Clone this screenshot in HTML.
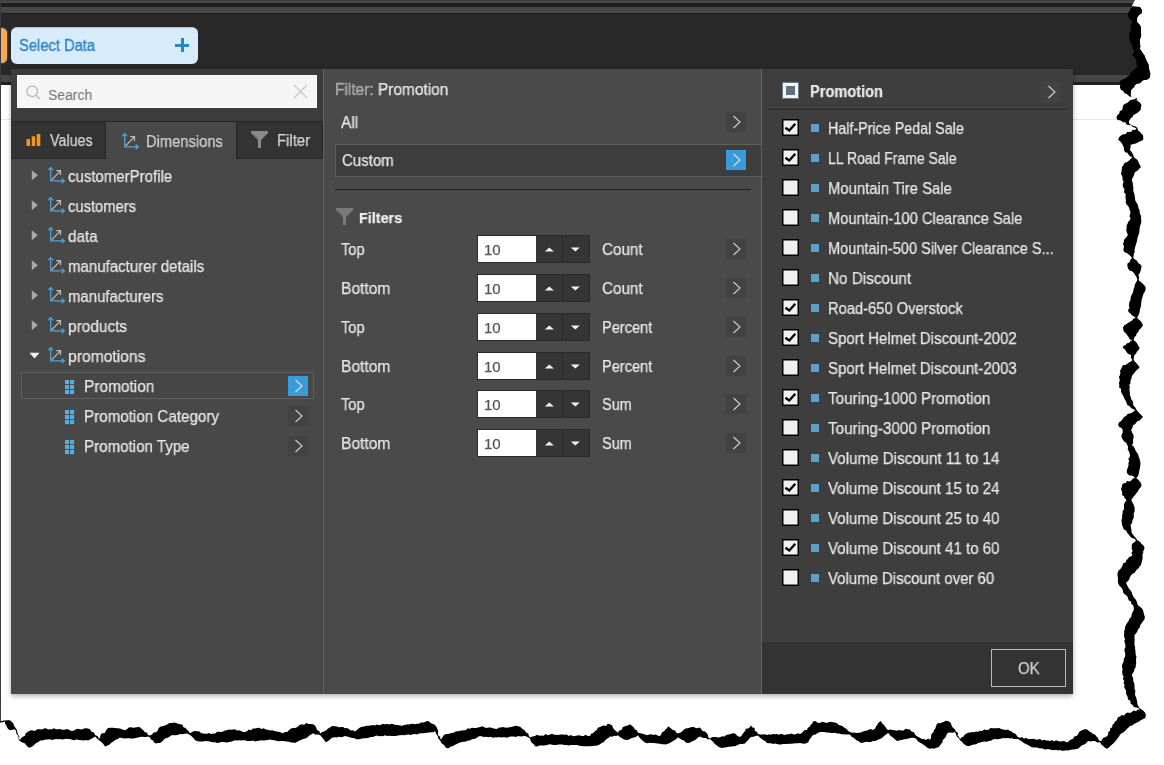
<!DOCTYPE html>
<html><head><meta charset="utf-8">
<style>
*{box-sizing:border-box;margin:0;padding:0}
html,body{width:1164px;height:765px;overflow:hidden;background:#fff}
body{position:relative;font-family:"Liberation Sans",sans-serif;font-size:15px;color:#e6e6e6}
.a{position:absolute}
.t{position:absolute;white-space:nowrap;line-height:1;will-change:transform;-webkit-text-stroke:0.25px currentColor}
</style></head><body>
<div class="a" style="left:0px;top:0px;width:1164px;height:1px;background:#3e3e3e;"></div>
<div class="a" style="left:0px;top:1px;width:1164px;height:2px;background:#4a4a4a;"></div>
<div class="a" style="left:0px;top:3px;width:1164px;height:4px;background:#1e1e1e;"></div>
<div class="a" style="left:0px;top:7px;width:1164px;height:6px;background:#474747;"></div>
<div class="a" style="left:0px;top:13px;width:1164px;height:1px;background:#1f1f1f;"></div>
<div class="a" style="left:0px;top:14px;width:1164px;height:61px;background:#282828;"></div>
<div class="a" style="left:0px;top:75px;width:1164px;height:7px;background:#474747;"></div>
<div class="a" style="left:0px;top:82px;width:1164px;height:3px;background:#1f1f1f;"></div>
<div class="a" style="left:0px;top:119px;width:1164px;height:1px;background:#e6e6e6;"></div>
<div class="a" style="left:-8px;top:27px;width:16px;height:37px;border-radius:6px;background:#f8ab52;border:1.2px solid #17486e"></div>
<div class="a" style="left:11px;top:27px;width:187px;height:37px;border-radius:6px;background:#d7ebfb;border-top:1px solid #b8c4cc"></div>
<div class="t" style="left:19.30px;top:37.66px;font-size:16px;color:#2f84c4;-webkit-text-stroke:0.35px #2f84c4;transform:scaleX(0.9205);transform-origin:0 0;">Select Data</div>
<div class="a" style="left:175px;top:44.4px;width:14.2px;height:2.4px;background:#2a84c0;"></div>
<div class="a" style="left:181.1px;top:38.1px;width:2.5px;height:13.9px;background:#2a84c0;"></div>
<div class="a" style="left:0px;top:0px;width:1px;height:722px;background:#3a3a3a;"></div>
<div class="a" style="left:11px;top:69px;width:1062px;height:625px;background:#4a4a4a;box-shadow:0 2px 5px rgba(0,0,0,.32)"></div>
<div class="a" style="left:11px;top:69px;width:312px;height:52px;background:#3c3c3c;"></div>
<div class="a" style="left:11px;top:121px;width:312px;height:1px;background:#262626;"></div>
<div class="a" style="left:11px;top:122px;width:312px;height:572px;background:#484848;"></div>
<div class="a" style="left:11px;top:122px;width:95px;height:37px;background:#333333;border-right:1px solid #262626;border-bottom:1px solid #262626"></div>
<div class="a" style="left:236px;top:122px;width:87px;height:37px;background:#333333;border-left:1px solid #262626;border-right:1px solid #262626;border-bottom:1px solid #262626"></div>
<div class="a" style="left:323px;top:69px;width:1px;height:625px;background:#636363;"></div>
<div class="a" style="left:17px;top:75px;width:300px;height:33px;background:#f5f5f5;border:1px solid #fdfdfd"></div>
<svg class="a" style="left:22.8px;top:82.8px" width="22" height="22"><circle cx="9.2" cy="8.3" r="5.3" fill="none" stroke="#bdbdbd" stroke-width="1.4"/><path d="M13 12.2 L16.8 16" stroke="#bdbdbd" stroke-width="1.5"/></svg>
<div class="t" style="left:47.90px;top:86.68px;font-size:15.5px;color:#767676;-webkit-text-stroke:0.1px #767676;transform:scaleX(0.9018);transform-origin:0 0;">Search</div>
<svg class="a" style="left:292px;top:83px" width="18" height="18"><path d="M2 2 L15 15 M15 2 L2 15" stroke="#c6c6c6" stroke-width="1.1"/></svg>
<svg class="a" style="left:26px;top:133px" width="16" height="14"><rect x="0.5" y="6" width="3.5" height="7" fill="#f7941d"/><rect x="5.7" y="3.3" width="3.4" height="9.7" fill="#f7941d"/><rect x="10.7" y="1" width="3.6" height="12" fill="#f7941d"/></svg>
<div class="t" style="left:50.20px;top:133.36px;font-size:16px;color:#d6d6d6;transform:scaleX(0.8919);transform-origin:0 0;">Values</div>
<svg class="a" style="left:121.7px;top:132.7px;overflow:visible" width="18" height="18"><path d="M2.7 0.4 V13.8 H16.5" fill="none" stroke="#52a2d2" stroke-width="1.3"/><path d="M0.3 3.1 L2.7 0.6 L5.1 3.1" fill="none" stroke="#52a2d2" stroke-width="1.3"/><path d="M13.6 11.4 L16.2 13.8 L13.6 16.2" fill="none" stroke="#52a2d2" stroke-width="1.3"/><path d="M3.6 12.8 L12.4 3.8 M8.3 3.7 H12.5 V7.9" fill="none" stroke="#bdbdbd" stroke-width="1.2"/></svg>
<div class="t" style="left:146.30px;top:134.26px;font-size:16px;color:#d0d0d0;transform:scaleX(0.9194);transform-origin:0 0;">Dimensions</div>
<svg class="a" style="left:251px;top:131px" width="17" height="17" viewBox="0 0 17 17"><path d="M0 0 H17 V2 L10 9 V17 H7 V9 L0 2 Z" fill="#8a8a8a"/><path d="M2 2.5 L7.5 8" stroke="#3a3a3a" stroke-width="0.6" fill="none" opacity="0.6"/></svg>
<div class="t" style="left:276.60px;top:133.36px;font-size:16px;color:#d6d6d6;transform:scaleX(0.9299);transform-origin:0 0;">Filter</div>
<svg class="a" style="left:31px;top:170.2px" width="8" height="11"><path d="M0.8 0.2 V10.2 L6.8 5.2 Z" fill="#a8a8a8"/></svg>
<svg class="a" style="left:48px;top:167.29999999999998px;overflow:visible" width="18" height="18"><path d="M2.7 0.4 V13.8 H16.5" fill="none" stroke="#52a2d2" stroke-width="1.3"/><path d="M0.3 3.1 L2.7 0.6 L5.1 3.1" fill="none" stroke="#52a2d2" stroke-width="1.3"/><path d="M13.6 11.4 L16.2 13.8 L13.6 16.2" fill="none" stroke="#52a2d2" stroke-width="1.3"/><path d="M3.6 12.8 L12.4 3.8 M8.3 3.7 H12.5 V7.9" fill="none" stroke="#bdbdbd" stroke-width="1.2"/></svg>
<div class="t" style="left:68.40px;top:168.56px;font-size:16px;color:#e6e6e6;transform:scaleX(0.9369);transform-origin:0 0;">customerProfile</div>
<svg class="a" style="left:31px;top:200.2px" width="8" height="11"><path d="M0.8 0.2 V10.2 L6.8 5.2 Z" fill="#a8a8a8"/></svg>
<svg class="a" style="left:48px;top:197.29999999999998px;overflow:visible" width="18" height="18"><path d="M2.7 0.4 V13.8 H16.5" fill="none" stroke="#52a2d2" stroke-width="1.3"/><path d="M0.3 3.1 L2.7 0.6 L5.1 3.1" fill="none" stroke="#52a2d2" stroke-width="1.3"/><path d="M13.6 11.4 L16.2 13.8 L13.6 16.2" fill="none" stroke="#52a2d2" stroke-width="1.3"/><path d="M3.6 12.8 L12.4 3.8 M8.3 3.7 H12.5 V7.9" fill="none" stroke="#bdbdbd" stroke-width="1.2"/></svg>
<div class="t" style="left:68.40px;top:198.56px;font-size:16px;color:#e6e6e6;transform:scaleX(0.9224);transform-origin:0 0;">customers</div>
<svg class="a" style="left:31px;top:230.2px" width="8" height="11"><path d="M0.8 0.2 V10.2 L6.8 5.2 Z" fill="#a8a8a8"/></svg>
<svg class="a" style="left:48px;top:227.29999999999998px;overflow:visible" width="18" height="18"><path d="M2.7 0.4 V13.8 H16.5" fill="none" stroke="#52a2d2" stroke-width="1.3"/><path d="M0.3 3.1 L2.7 0.6 L5.1 3.1" fill="none" stroke="#52a2d2" stroke-width="1.3"/><path d="M13.6 11.4 L16.2 13.8 L13.6 16.2" fill="none" stroke="#52a2d2" stroke-width="1.3"/><path d="M3.6 12.8 L12.4 3.8 M8.3 3.7 H12.5 V7.9" fill="none" stroke="#bdbdbd" stroke-width="1.2"/></svg>
<div class="t" style="left:68.40px;top:228.56px;font-size:16px;color:#e6e6e6;transform:scaleX(0.9528);transform-origin:0 0;">data</div>
<svg class="a" style="left:31px;top:260.2px" width="8" height="11"><path d="M0.8 0.2 V10.2 L6.8 5.2 Z" fill="#a8a8a8"/></svg>
<svg class="a" style="left:48px;top:257.3px;overflow:visible" width="18" height="18"><path d="M2.7 0.4 V13.8 H16.5" fill="none" stroke="#52a2d2" stroke-width="1.3"/><path d="M0.3 3.1 L2.7 0.6 L5.1 3.1" fill="none" stroke="#52a2d2" stroke-width="1.3"/><path d="M13.6 11.4 L16.2 13.8 L13.6 16.2" fill="none" stroke="#52a2d2" stroke-width="1.3"/><path d="M3.6 12.8 L12.4 3.8 M8.3 3.7 H12.5 V7.9" fill="none" stroke="#bdbdbd" stroke-width="1.2"/></svg>
<div class="t" style="left:68.40px;top:258.56px;font-size:16px;color:#e6e6e6;transform:scaleX(0.9395);transform-origin:0 0;">manufacturer details</div>
<svg class="a" style="left:31px;top:290.2px" width="8" height="11"><path d="M0.8 0.2 V10.2 L6.8 5.2 Z" fill="#a8a8a8"/></svg>
<svg class="a" style="left:48px;top:287.3px;overflow:visible" width="18" height="18"><path d="M2.7 0.4 V13.8 H16.5" fill="none" stroke="#52a2d2" stroke-width="1.3"/><path d="M0.3 3.1 L2.7 0.6 L5.1 3.1" fill="none" stroke="#52a2d2" stroke-width="1.3"/><path d="M13.6 11.4 L16.2 13.8 L13.6 16.2" fill="none" stroke="#52a2d2" stroke-width="1.3"/><path d="M3.6 12.8 L12.4 3.8 M8.3 3.7 H12.5 V7.9" fill="none" stroke="#bdbdbd" stroke-width="1.2"/></svg>
<div class="t" style="left:68.40px;top:288.56px;font-size:16px;color:#e6e6e6;transform:scaleX(0.9333);transform-origin:0 0;">manufacturers</div>
<svg class="a" style="left:31px;top:320.2px" width="8" height="11"><path d="M0.8 0.2 V10.2 L6.8 5.2 Z" fill="#a8a8a8"/></svg>
<svg class="a" style="left:48px;top:317.3px;overflow:visible" width="18" height="18"><path d="M2.7 0.4 V13.8 H16.5" fill="none" stroke="#52a2d2" stroke-width="1.3"/><path d="M0.3 3.1 L2.7 0.6 L5.1 3.1" fill="none" stroke="#52a2d2" stroke-width="1.3"/><path d="M13.6 11.4 L16.2 13.8 L13.6 16.2" fill="none" stroke="#52a2d2" stroke-width="1.3"/><path d="M3.6 12.8 L12.4 3.8 M8.3 3.7 H12.5 V7.9" fill="none" stroke="#bdbdbd" stroke-width="1.2"/></svg>
<div class="t" style="left:68.40px;top:318.56px;font-size:16px;color:#e6e6e6;transform:scaleX(0.9624);transform-origin:0 0;">products</div>
<svg class="a" style="left:29px;top:352.2px" width="12" height="8"><path d="M0.5 0.8 H10.5 L5.5 6.5 Z" fill="#f0f0f0"/></svg>
<svg class="a" style="left:48px;top:347.3px;overflow:visible" width="18" height="18"><path d="M2.7 0.4 V13.8 H16.5" fill="none" stroke="#52a2d2" stroke-width="1.3"/><path d="M0.3 3.1 L2.7 0.6 L5.1 3.1" fill="none" stroke="#52a2d2" stroke-width="1.3"/><path d="M13.6 11.4 L16.2 13.8 L13.6 16.2" fill="none" stroke="#52a2d2" stroke-width="1.3"/><path d="M3.6 12.8 L12.4 3.8 M8.3 3.7 H12.5 V7.9" fill="none" stroke="#bdbdbd" stroke-width="1.2"/></svg>
<div class="t" style="left:68.40px;top:348.56px;font-size:16px;color:#e6e6e6;transform:scaleX(0.9785);transform-origin:0 0;">promotions</div>
<div class="a" style="left:21px;top:372px;width:293px;height:27px;background:#464646;border:1px solid #5e5e5e"></div>
<svg class="a" style="left:65px;top:379.7px" width="10" height="15"><rect x="0" y="0" width="4.1" height="4.1" fill="#5aaedb"/><rect x="5" y="0" width="4.1" height="4.1" fill="#5aaedb"/><rect x="0" y="5" width="4.1" height="4.1" fill="#5aaedb"/><rect x="5" y="5" width="4.1" height="4.1" fill="#5aaedb"/><rect x="0" y="10" width="4.1" height="4.1" fill="#5aaedb"/><rect x="5" y="10" width="4.1" height="4.1" fill="#5aaedb"/></svg>
<div class="t" style="left:83.60px;top:379.06px;font-size:16px;color:#e6e6e6;transform:scaleX(0.9648);transform-origin:0 0;">Promotion</div>
<svg class="a" style="left:288px;top:376px" width="20" height="20"><rect width="20" height="20" fill="#3a9bd9"/><path d="M7.5 4 L14 10 L7.5 16" fill="none" stroke="#e0e0e0" stroke-width="1.1"/></svg>
<svg class="a" style="left:65px;top:409.7px" width="10" height="15"><rect x="0" y="0" width="4.1" height="4.1" fill="#5aaedb"/><rect x="5" y="0" width="4.1" height="4.1" fill="#5aaedb"/><rect x="0" y="5" width="4.1" height="4.1" fill="#5aaedb"/><rect x="5" y="5" width="4.1" height="4.1" fill="#5aaedb"/><rect x="0" y="10" width="4.1" height="4.1" fill="#5aaedb"/><rect x="5" y="10" width="4.1" height="4.1" fill="#5aaedb"/></svg>
<div class="t" style="left:83.60px;top:409.06px;font-size:16px;color:#e6e6e6;transform:scaleX(0.9488);transform-origin:0 0;">Promotion Category</div>
<svg class="a" style="left:288px;top:406px" width="20" height="20"><rect width="20" height="20" fill="#424242"/><path d="M7.5 4 L14 10 L7.5 16" fill="none" stroke="#cfcfcf" stroke-width="1.1"/></svg>
<svg class="a" style="left:65px;top:439.7px" width="10" height="15"><rect x="0" y="0" width="4.1" height="4.1" fill="#5aaedb"/><rect x="5" y="0" width="4.1" height="4.1" fill="#5aaedb"/><rect x="0" y="5" width="4.1" height="4.1" fill="#5aaedb"/><rect x="5" y="5" width="4.1" height="4.1" fill="#5aaedb"/><rect x="0" y="10" width="4.1" height="4.1" fill="#5aaedb"/><rect x="5" y="10" width="4.1" height="4.1" fill="#5aaedb"/></svg>
<div class="t" style="left:83.60px;top:439.06px;font-size:16px;color:#e6e6e6;transform:scaleX(0.9449);transform-origin:0 0;">Promotion Type</div>
<svg class="a" style="left:288px;top:436px" width="20" height="20"><rect width="20" height="20" fill="#424242"/><path d="M7.5 4 L14 10 L7.5 16" fill="none" stroke="#cfcfcf" stroke-width="1.1"/></svg>
<div class="t" style="left:334.60px;top:82.36px;font-size:16px;color:#e8e8e8;transform:scaleX(0.9654);transform-origin:0 0;"><span style="color:#a8a8a8;-webkit-text-stroke:0.5px #a8a8a8">Filter:</span> Promotion</div>
<div class="t" style="left:341.00px;top:114.96px;font-size:16px;color:#e6e6e6;transform:scaleX(0.9665);transform-origin:0 0;">All</div>
<svg class="a" style="left:726px;top:112px" width="20" height="20"><rect width="20" height="20" fill="#424242"/><path d="M7.5 4 L14 10 L7.5 16" fill="none" stroke="#cfcfcf" stroke-width="1.1"/></svg>
<div class="a" style="left:335px;top:144px;width:426px;height:33px;background:#3d3d3d;border:1px solid #5e5e5e;border-right:none"></div>
<div class="t" style="left:341.50px;top:152.96px;font-size:16px;color:#e6e6e6;transform:scaleX(0.9373);transform-origin:0 0;">Custom</div>
<svg class="a" style="left:726px;top:150px" width="20" height="20"><rect width="20" height="20" fill="#3a9bd9"/><path d="M7.5 4 L14 10 L7.5 16" fill="none" stroke="#e0e0e0" stroke-width="1.1"/></svg>
<div class="a" style="left:335px;top:189px;width:416px;height:1px;background:#222222;"></div>
<svg class="a" style="left:336px;top:208px" width="17" height="17" viewBox="0 0 17 17"><path d="M0 0 H17 V2 L10 9 V17 H7 V9 L0 2 Z" fill="#7a7a7a"/><path d="M2 2.5 L7.5 8" stroke="#3a3a3a" stroke-width="0.6" fill="none" opacity="0.6"/></svg>
<div class="t" style="left:358.90px;top:210.48px;font-size:15.5px;color:#f0f0f0;font-weight:bold;transform:scaleX(0.9284);transform-origin:0 0;">Filters</div>
<div class="t" style="left:341.30px;top:242.36px;font-size:16px;color:#e6e6e6;transform:scaleX(0.9099);transform-origin:0 0;">Top</div>
<div class="a" style="left:477px;top:235px;width:113px;height:28px;background:#2a2a2a;"></div>
<div class="a" style="left:478px;top:236px;width:58px;height:26px;background:#ffffff;"></div>
<div class="a" style="left:536px;top:236px;width:26px;height:26px;background:#353535;"></div>
<div class="a" style="left:563px;top:236px;width:26px;height:26px;background:#353535;"></div>
<div class="t" style="left:483.60px;top:241.50px;font-size:15px;color:#555555;">10</div>
<svg class="a" style="left:544px;top:247px" width="11" height="6"><path d="M0.8 4.6 L5.3 0.4 L9.8 4.6 Z" fill="#f4f4f4"/></svg>
<svg class="a" style="left:570px;top:247px" width="11" height="6"><path d="M0.8 0.4 L5.3 4.6 L9.8 0.4 Z" fill="#f4f4f4"/></svg>
<div class="t" style="left:602.10px;top:242.36px;font-size:16px;color:#e6e6e6;transform:scaleX(0.9524);transform-origin:0 0;">Count</div>
<svg class="a" style="left:726px;top:239px" width="20" height="20"><rect width="20" height="20" fill="#424242"/><path d="M7.5 4 L14 10 L7.5 16" fill="none" stroke="#cfcfcf" stroke-width="1.1"/></svg>
<div class="t" style="left:341.30px;top:281.36px;font-size:16px;color:#e6e6e6;transform:scaleX(0.9740);transform-origin:0 0;">Bottom</div>
<div class="a" style="left:477px;top:274px;width:113px;height:28px;background:#2a2a2a;"></div>
<div class="a" style="left:478px;top:275px;width:58px;height:26px;background:#ffffff;"></div>
<div class="a" style="left:536px;top:275px;width:26px;height:26px;background:#353535;"></div>
<div class="a" style="left:563px;top:275px;width:26px;height:26px;background:#353535;"></div>
<div class="t" style="left:483.60px;top:280.50px;font-size:15px;color:#555555;">10</div>
<svg class="a" style="left:544px;top:286px" width="11" height="6"><path d="M0.8 4.6 L5.3 0.4 L9.8 4.6 Z" fill="#f4f4f4"/></svg>
<svg class="a" style="left:570px;top:286px" width="11" height="6"><path d="M0.8 0.4 L5.3 4.6 L9.8 0.4 Z" fill="#f4f4f4"/></svg>
<div class="t" style="left:602.10px;top:281.36px;font-size:16px;color:#e6e6e6;transform:scaleX(0.9524);transform-origin:0 0;">Count</div>
<svg class="a" style="left:726px;top:278px" width="20" height="20"><rect width="20" height="20" fill="#424242"/><path d="M7.5 4 L14 10 L7.5 16" fill="none" stroke="#cfcfcf" stroke-width="1.1"/></svg>
<div class="t" style="left:341.30px;top:320.36px;font-size:16px;color:#e6e6e6;transform:scaleX(0.9099);transform-origin:0 0;">Top</div>
<div class="a" style="left:477px;top:313px;width:113px;height:28px;background:#2a2a2a;"></div>
<div class="a" style="left:478px;top:314px;width:58px;height:26px;background:#ffffff;"></div>
<div class="a" style="left:536px;top:314px;width:26px;height:26px;background:#353535;"></div>
<div class="a" style="left:563px;top:314px;width:26px;height:26px;background:#353535;"></div>
<div class="t" style="left:483.60px;top:319.50px;font-size:15px;color:#555555;">10</div>
<svg class="a" style="left:544px;top:325px" width="11" height="6"><path d="M0.8 4.6 L5.3 0.4 L9.8 4.6 Z" fill="#f4f4f4"/></svg>
<svg class="a" style="left:570px;top:325px" width="11" height="6"><path d="M0.8 0.4 L5.3 4.6 L9.8 0.4 Z" fill="#f4f4f4"/></svg>
<div class="t" style="left:602.10px;top:320.36px;font-size:16px;color:#e6e6e6;transform:scaleX(0.9099);transform-origin:0 0;">Percent</div>
<svg class="a" style="left:726px;top:317px" width="20" height="20"><rect width="20" height="20" fill="#424242"/><path d="M7.5 4 L14 10 L7.5 16" fill="none" stroke="#cfcfcf" stroke-width="1.1"/></svg>
<div class="t" style="left:341.30px;top:359.36px;font-size:16px;color:#e6e6e6;transform:scaleX(0.9740);transform-origin:0 0;">Bottom</div>
<div class="a" style="left:477px;top:352px;width:113px;height:28px;background:#2a2a2a;"></div>
<div class="a" style="left:478px;top:353px;width:58px;height:26px;background:#ffffff;"></div>
<div class="a" style="left:536px;top:353px;width:26px;height:26px;background:#353535;"></div>
<div class="a" style="left:563px;top:353px;width:26px;height:26px;background:#353535;"></div>
<div class="t" style="left:483.60px;top:358.50px;font-size:15px;color:#555555;">10</div>
<svg class="a" style="left:544px;top:364px" width="11" height="6"><path d="M0.8 4.6 L5.3 0.4 L9.8 4.6 Z" fill="#f4f4f4"/></svg>
<svg class="a" style="left:570px;top:364px" width="11" height="6"><path d="M0.8 0.4 L5.3 4.6 L9.8 0.4 Z" fill="#f4f4f4"/></svg>
<div class="t" style="left:602.10px;top:359.36px;font-size:16px;color:#e6e6e6;transform:scaleX(0.9099);transform-origin:0 0;">Percent</div>
<svg class="a" style="left:726px;top:356px" width="20" height="20"><rect width="20" height="20" fill="#424242"/><path d="M7.5 4 L14 10 L7.5 16" fill="none" stroke="#cfcfcf" stroke-width="1.1"/></svg>
<div class="t" style="left:341.30px;top:397.36px;font-size:16px;color:#e6e6e6;transform:scaleX(0.9099);transform-origin:0 0;">Top</div>
<div class="a" style="left:477px;top:390px;width:113px;height:28px;background:#2a2a2a;"></div>
<div class="a" style="left:478px;top:391px;width:58px;height:26px;background:#ffffff;"></div>
<div class="a" style="left:536px;top:391px;width:26px;height:26px;background:#353535;"></div>
<div class="a" style="left:563px;top:391px;width:26px;height:26px;background:#353535;"></div>
<div class="t" style="left:483.60px;top:396.50px;font-size:15px;color:#555555;">10</div>
<svg class="a" style="left:544px;top:402px" width="11" height="6"><path d="M0.8 4.6 L5.3 0.4 L9.8 4.6 Z" fill="#f4f4f4"/></svg>
<svg class="a" style="left:570px;top:402px" width="11" height="6"><path d="M0.8 0.4 L5.3 4.6 L9.8 0.4 Z" fill="#f4f4f4"/></svg>
<div class="t" style="left:602.10px;top:397.36px;font-size:16px;color:#e6e6e6;transform:scaleX(0.9056);transform-origin:0 0;">Sum</div>
<svg class="a" style="left:726px;top:394px" width="20" height="20"><rect width="20" height="20" fill="#424242"/><path d="M7.5 4 L14 10 L7.5 16" fill="none" stroke="#cfcfcf" stroke-width="1.1"/></svg>
<div class="t" style="left:341.30px;top:436.36px;font-size:16px;color:#e6e6e6;transform:scaleX(0.9740);transform-origin:0 0;">Bottom</div>
<div class="a" style="left:477px;top:429px;width:113px;height:28px;background:#2a2a2a;"></div>
<div class="a" style="left:478px;top:430px;width:58px;height:26px;background:#ffffff;"></div>
<div class="a" style="left:536px;top:430px;width:26px;height:26px;background:#353535;"></div>
<div class="a" style="left:563px;top:430px;width:26px;height:26px;background:#353535;"></div>
<div class="t" style="left:483.60px;top:435.50px;font-size:15px;color:#555555;">10</div>
<svg class="a" style="left:544px;top:441px" width="11" height="6"><path d="M0.8 4.6 L5.3 0.4 L9.8 4.6 Z" fill="#f4f4f4"/></svg>
<svg class="a" style="left:570px;top:441px" width="11" height="6"><path d="M0.8 0.4 L5.3 4.6 L9.8 0.4 Z" fill="#f4f4f4"/></svg>
<div class="t" style="left:602.10px;top:436.36px;font-size:16px;color:#e6e6e6;transform:scaleX(0.9056);transform-origin:0 0;">Sum</div>
<svg class="a" style="left:726px;top:433px" width="20" height="20"><rect width="20" height="20" fill="#424242"/><path d="M7.5 4 L14 10 L7.5 16" fill="none" stroke="#cfcfcf" stroke-width="1.1"/></svg>
<div class="a" style="left:762px;top:69px;width:311px;height:625px;background:#3e3e3e;"></div>
<div class="a" style="left:761px;top:69px;width:1px;height:625px;background:#646464;"></div>
<svg class="a" style="left:782px;top:82px" width="17" height="17"><rect x="0.5" y="0.5" width="16" height="16" fill="#f4f4f4" stroke="#6b7c8c" stroke-width="1"/><rect x="4" y="4" width="9" height="9" fill="#5f7181"/></svg>
<div class="t" style="left:810.00px;top:84.36px;font-size:16px;color:#e8e8e8;font-weight:bold;transform:scaleX(0.9107);transform-origin:0 0;">Promotion</div>
<svg class="a" style="left:1041px;top:82px" width="20" height="20"><rect width="20" height="20" fill="#424242"/><path d="M7.5 4 L14 10 L7.5 16" fill="none" stroke="#cfcfcf" stroke-width="1.1"/></svg>
<div class="a" style="left:768px;top:109px;width:299px;height:1px;background:#282828;"></div>
<svg class="a" style="left:782px;top:119px" width="17" height="17"><rect x="0.75" y="0.75" width="15.5" height="15.5" fill="#f0f0f0" stroke="#000" stroke-width="1.5"/><path d="M3.4 8.7 L7.3 11.5 L13.3 4.8" fill="none" stroke="#000" stroke-width="2.3"/></svg>
<div class="a" style="left:811px;top:124px;width:8px;height:8px;background:#5d9fc8;"></div>
<div class="t" style="left:828.10px;top:121.16px;font-size:16px;color:#e6e6e6;transform:scaleX(0.8930);transform-origin:0 0;">Half-Price Pedal Sale</div>
<svg class="a" style="left:782px;top:149px" width="17" height="17"><rect x="0.75" y="0.75" width="15.5" height="15.5" fill="#f0f0f0" stroke="#000" stroke-width="1.5"/><path d="M3.4 8.7 L7.3 11.5 L13.3 4.8" fill="none" stroke="#000" stroke-width="2.3"/></svg>
<div class="a" style="left:811px;top:154px;width:8px;height:8px;background:#5d9fc8;"></div>
<div class="t" style="left:828.10px;top:151.16px;font-size:16px;color:#e6e6e6;transform:scaleX(0.8739);transform-origin:0 0;">LL Road Frame Sale</div>
<svg class="a" style="left:782px;top:179px" width="17" height="17"><rect x="0.75" y="0.75" width="15.5" height="15.5" fill="#f0f0f0" stroke="#000" stroke-width="1.5"/></svg>
<div class="a" style="left:811px;top:184px;width:8px;height:8px;background:#5d9fc8;"></div>
<div class="t" style="left:828.10px;top:181.16px;font-size:16px;color:#e6e6e6;transform:scaleX(0.9279);transform-origin:0 0;">Mountain Tire Sale</div>
<svg class="a" style="left:782px;top:209px" width="17" height="17"><rect x="0.75" y="0.75" width="15.5" height="15.5" fill="#f0f0f0" stroke="#000" stroke-width="1.5"/></svg>
<div class="a" style="left:811px;top:214px;width:8px;height:8px;background:#5d9fc8;"></div>
<div class="t" style="left:828.10px;top:211.16px;font-size:16px;color:#e6e6e6;transform:scaleX(0.9181);transform-origin:0 0;">Mountain-100 Clearance Sale</div>
<svg class="a" style="left:782px;top:239px" width="17" height="17"><rect x="0.75" y="0.75" width="15.5" height="15.5" fill="#f0f0f0" stroke="#000" stroke-width="1.5"/></svg>
<div class="a" style="left:811px;top:244px;width:8px;height:8px;background:#5d9fc8;"></div>
<div class="t" style="left:828.10px;top:241.16px;font-size:16px;color:#e6e6e6;transform:scaleX(0.9097);transform-origin:0 0;">Mountain-500 Silver Clearance S...</div>
<svg class="a" style="left:782px;top:269px" width="17" height="17"><rect x="0.75" y="0.75" width="15.5" height="15.5" fill="#f0f0f0" stroke="#000" stroke-width="1.5"/></svg>
<div class="a" style="left:811px;top:274px;width:8px;height:8px;background:#5d9fc8;"></div>
<div class="t" style="left:828.10px;top:271.16px;font-size:16px;color:#e6e6e6;transform:scaleX(0.9539);transform-origin:0 0;">No Discount</div>
<svg class="a" style="left:782px;top:299px" width="17" height="17"><rect x="0.75" y="0.75" width="15.5" height="15.5" fill="#f0f0f0" stroke="#000" stroke-width="1.5"/><path d="M3.4 8.7 L7.3 11.5 L13.3 4.8" fill="none" stroke="#000" stroke-width="2.3"/></svg>
<div class="a" style="left:811px;top:304px;width:8px;height:8px;background:#5d9fc8;"></div>
<div class="t" style="left:828.10px;top:301.16px;font-size:16px;color:#e6e6e6;transform:scaleX(0.9188);transform-origin:0 0;">Road-650 Overstock</div>
<svg class="a" style="left:782px;top:329px" width="17" height="17"><rect x="0.75" y="0.75" width="15.5" height="15.5" fill="#f0f0f0" stroke="#000" stroke-width="1.5"/><path d="M3.4 8.7 L7.3 11.5 L13.3 4.8" fill="none" stroke="#000" stroke-width="2.3"/></svg>
<div class="a" style="left:811px;top:334px;width:8px;height:8px;background:#5d9fc8;"></div>
<div class="t" style="left:828.10px;top:331.16px;font-size:16px;color:#e6e6e6;transform:scaleX(0.9391);transform-origin:0 0;">Sport Helmet Discount-2002</div>
<svg class="a" style="left:782px;top:359px" width="17" height="17"><rect x="0.75" y="0.75" width="15.5" height="15.5" fill="#f0f0f0" stroke="#000" stroke-width="1.5"/></svg>
<div class="a" style="left:811px;top:364px;width:8px;height:8px;background:#5d9fc8;"></div>
<div class="t" style="left:828.10px;top:361.16px;font-size:16px;color:#e6e6e6;transform:scaleX(0.9391);transform-origin:0 0;">Sport Helmet Discount-2003</div>
<svg class="a" style="left:782px;top:389px" width="17" height="17"><rect x="0.75" y="0.75" width="15.5" height="15.5" fill="#f0f0f0" stroke="#000" stroke-width="1.5"/><path d="M3.4 8.7 L7.3 11.5 L13.3 4.8" fill="none" stroke="#000" stroke-width="2.3"/></svg>
<div class="a" style="left:811px;top:394px;width:8px;height:8px;background:#5d9fc8;"></div>
<div class="t" style="left:828.10px;top:391.16px;font-size:16px;color:#e6e6e6;transform:scaleX(0.9508);transform-origin:0 0;">Touring-1000 Promotion</div>
<svg class="a" style="left:782px;top:419px" width="17" height="17"><rect x="0.75" y="0.75" width="15.5" height="15.5" fill="#f0f0f0" stroke="#000" stroke-width="1.5"/></svg>
<div class="a" style="left:811px;top:424px;width:8px;height:8px;background:#5d9fc8;"></div>
<div class="t" style="left:828.10px;top:421.16px;font-size:16px;color:#e6e6e6;transform:scaleX(0.9508);transform-origin:0 0;">Touring-3000 Promotion</div>
<svg class="a" style="left:782px;top:449px" width="17" height="17"><rect x="0.75" y="0.75" width="15.5" height="15.5" fill="#f0f0f0" stroke="#000" stroke-width="1.5"/></svg>
<div class="a" style="left:811px;top:454px;width:8px;height:8px;background:#5d9fc8;"></div>
<div class="t" style="left:828.10px;top:451.16px;font-size:16px;color:#e6e6e6;transform:scaleX(0.9464);transform-origin:0 0;">Volume Discount 11 to 14</div>
<svg class="a" style="left:782px;top:479px" width="17" height="17"><rect x="0.75" y="0.75" width="15.5" height="15.5" fill="#f0f0f0" stroke="#000" stroke-width="1.5"/><path d="M3.4 8.7 L7.3 11.5 L13.3 4.8" fill="none" stroke="#000" stroke-width="2.3"/></svg>
<div class="a" style="left:811px;top:484px;width:8px;height:8px;background:#5d9fc8;"></div>
<div class="t" style="left:828.10px;top:481.16px;font-size:16px;color:#e6e6e6;transform:scaleX(0.9403);transform-origin:0 0;">Volume Discount 15 to 24</div>
<svg class="a" style="left:782px;top:509px" width="17" height="17"><rect x="0.75" y="0.75" width="15.5" height="15.5" fill="#f0f0f0" stroke="#000" stroke-width="1.5"/></svg>
<div class="a" style="left:811px;top:514px;width:8px;height:8px;background:#5d9fc8;"></div>
<div class="t" style="left:828.10px;top:511.16px;font-size:16px;color:#e6e6e6;transform:scaleX(0.9403);transform-origin:0 0;">Volume Discount 25 to 40</div>
<svg class="a" style="left:782px;top:539px" width="17" height="17"><rect x="0.75" y="0.75" width="15.5" height="15.5" fill="#f0f0f0" stroke="#000" stroke-width="1.5"/><path d="M3.4 8.7 L7.3 11.5 L13.3 4.8" fill="none" stroke="#000" stroke-width="2.3"/></svg>
<div class="a" style="left:811px;top:544px;width:8px;height:8px;background:#5d9fc8;"></div>
<div class="t" style="left:828.10px;top:541.16px;font-size:16px;color:#e6e6e6;transform:scaleX(0.9403);transform-origin:0 0;">Volume Discount 41 to 60</div>
<svg class="a" style="left:782px;top:569px" width="17" height="17"><rect x="0.75" y="0.75" width="15.5" height="15.5" fill="#f0f0f0" stroke="#000" stroke-width="1.5"/></svg>
<div class="a" style="left:811px;top:574px;width:8px;height:8px;background:#5d9fc8;"></div>
<div class="t" style="left:828.10px;top:571.16px;font-size:16px;color:#e6e6e6;transform:scaleX(0.9342);transform-origin:0 0;">Volume Discount over 60</div>
<div class="a" style="left:762px;top:642px;width:311px;height:52px;background:#333333;"></div>
<div class="a" style="left:991px;top:649px;width:75px;height:38px;background:transparent;border:1px solid #b9b9b9"></div>
<div class="t" style="left:1018.00px;top:660.76px;font-size:16px;color:#d2d2d2;transform:scaleX(0.9341);transform-origin:0 0;">OK</div>
<svg class="a" style="left:0;top:0" width="1164" height="765"><polygon points="1135.0,0.0 1131.8,6.0 1140.0,7.0 1142.0,10.0 1142.0,13.0 1138.8,15.0 1137.0,18.0 1137.1,20.0 1137.0,22.0 1138.5,23.5 1140.0,25.0 1140.9,27.4 1140.9,30.0 1140.8,32.3 1141.2,34.7 1140.9,37.0 1139.7,40.0 1140.0,42.0 1139.8,44.0 1140.4,46.0 1140.0,48.0 1140.3,50.0 1141.8,51.5 1142.9,53.4 1144.3,55.0 1145.1,57.5 1146.2,60.0 1147.3,62.3 1148.5,64.4 1148.8,67.0 1149.1,69.0 1149.5,71.0 1150.3,72.9 1150.2,75.0 1149.9,77.3 1148.2,79.0 1146.0,79.9 1143.7,80.0 1141.6,81.4 1139.8,83.2 1137.2,83.6 1135.1,85.0 1134.3,87.1 1132.6,88.4 1131.2,90.0 1130.9,92.5 1130.8,95.0 1131.0,96.5 1133.9,97.3 1136.8,98.0 1136.7,100.0 1138.3,101.6 1140.3,102.9 1141.4,105.0 1141.0,107.5 1140.6,110.0 1139.0,111.6 1137.3,112.9 1135.4,113.9 1133.5,115.0 1132.5,116.9 1130.8,118.2 1129.6,120.0 1128.8,122.0 1129.5,124.0 1131.4,125.1 1133.5,126.0 1135.7,126.6 1137.5,128.0 1138.0,130.5 1139.8,131.8 1141.3,133.4 1142.9,135.0 1143.3,137.5 1143.0,140.0 1141.0,141.1 1138.9,141.8 1137.0,143.1 1134.9,143.8 1132.6,144.2 1130.5,145.0 1130.6,147.5 1129.9,150.0 1131.2,151.6 1132.4,153.2 1133.3,155.0 1133.8,157.0 1135.4,158.6 1137.4,159.8 1138.4,162.0 1139.6,164.5 1141.0,167.0 1139.2,168.8 1137.4,170.8 1135.1,172.0 1134.2,174.0 1133.7,176.1 1132.5,177.9 1131.8,180.0 1132.5,181.9 1132.9,183.9 1132.9,186.0 1133.5,187.9 1133.1,190.0 1133.6,192.0 1134.4,193.9 1134.7,195.9 1135.1,197.9 1135.1,200.0 1136.1,201.9 1137.2,203.8 1138.1,205.7 1138.4,207.9 1139.4,209.8 1139.7,212.0 1140.0,214.0 1141.1,215.9 1141.0,218.0 1141.2,220.1 1141.3,222.1 1140.8,224.1 1140.0,226.0 1139.7,228.0 1139.4,230.4 1139.3,232.8 1138.4,235.0 1137.6,237.5 1137.1,240.0 1136.8,242.1 1136.0,244.0 1135.5,246.0 1134.9,248.0 1134.5,250.0 1134.7,252.1 1133.8,254.0 1133.6,256.0 1133.2,258.0 1135.0,259.5 1137.0,260.7 1138.2,262.9 1140.1,264.2 1141.6,266.0 1141.1,268.4 1140.6,270.7 1139.8,273.0 1138.4,275.0 1139.2,277.5 1138.6,280.0 1140.4,281.7 1142.3,283.3 1144.0,285.1 1145.6,287.0 1145.6,289.4 1145.0,291.6 1143.6,293.5 1142.9,295.7 1142.3,297.8 1141.6,300.0 1141.3,302.0 1141.2,304.0 1141.0,306.1 1140.4,308.0 1139.8,310.0 1139.7,312.0 1139.0,314.1 1138.1,316.1 1137.0,318.0 1138.8,319.5 1140.6,321.0 1141.9,322.9 1143.0,325.0 1141.9,326.9 1140.7,328.6 1139.0,330.0 1138.3,332.0 1136.6,333.4 1136.2,335.6 1134.5,337.0 1133.6,340.0 1135.3,341.2 1136.6,342.8 1137.7,344.4 1138.6,346.3 1139.7,348.0 1138.6,349.9 1137.0,351.4 1136.1,353.5 1134.5,355.0 1133.9,357.5 1133.6,360.0 1135.0,361.8 1136.7,363.5 1138.1,365.3 1139.7,367.0 1138.4,368.7 1136.7,370.1 1135.2,371.7 1133.9,373.4 1132.5,375.0 1131.7,377.0 1131.3,379.1 1130.4,380.9 1130.5,383.2 1129.2,385.0 1129.8,387.0 1129.4,389.0 1129.7,391.0 1129.9,393.0 1129.9,395.0 1130.7,396.9 1131.1,399.0 1132.4,400.8 1133.2,402.8 1133.1,405.0 1134.5,406.5 1135.7,408.2 1136.6,410.0 1138.1,411.8 1139.7,413.6 1141.5,415.2 1143.0,417.0 1141.4,418.4 1140.1,420.2 1138.0,421.0 1136.3,422.2 1135.2,424.3 1133.1,425.0 1132.5,427.6 1131.2,430.0 1132.0,432.4 1133.3,434.5 1133.8,437.0 1133.1,439.0 1133.1,441.1 1133.1,443.2 1131.8,445.0 1133.7,446.6 1134.9,448.7 1135.8,451.0 1137.2,452.9 1138.4,455.0 1138.7,457.0 1139.7,458.9 1139.9,460.9 1140.5,462.9 1140.3,465.0 1140.0,467.4 1139.5,469.7 1139.0,472.0 1138.7,474.3 1137.9,476.3 1136.3,478.0 1138.1,479.4 1139.4,481.1 1140.8,482.9 1141.6,485.0 1140.8,487.3 1139.0,489.0 1138.0,491.2 1136.5,493.1 1135.1,495.0 1133.7,496.6 1132.4,498.2 1131.2,500.0 1132.4,502.3 1133.5,504.6 1134.5,507.0 1134.7,509.2 1134.6,511.4 1133.7,513.5 1133.9,515.8 1133.6,518.0 1132.5,520.0 1132.2,522.8 1130.5,525.0 1131.0,527.0 1131.2,529.0 1131.5,531.0 1131.8,533.0 1133.1,534.8 1134.4,536.5 1136.0,538.0 1137.0,540.0 1138.9,540.9 1140.4,542.3 1141.6,544.0 1143.2,545.3 1144.3,547.0 1144.4,549.1 1143.2,551.0 1143.2,553.1 1142.3,555.0 1142.7,557.1 1142.4,559.1 1142.1,561.1 1141.5,563.0 1141.0,565.0 1139.6,566.4 1138.6,568.3 1136.9,569.4 1135.8,571.1 1134.6,572.7 1132.7,573.7 1131.2,575.0 1130.0,577.1 1129.2,579.4 1127.7,581.3 1125.9,583.0 1127.0,585.0 1128.0,587.0 1129.2,589.0 1130.9,590.7 1131.9,592.7 1132.5,595.0 1133.5,597.0 1135.1,598.7 1136.3,600.6 1137.1,602.8 1137.7,605.0 1139.6,606.6 1141.5,608.1 1143.0,610.0 1143.6,612.4 1144.1,614.7 1144.9,617.0 1144.4,619.4 1143.0,621.2 1141.7,623.2 1140.3,625.0 1139.8,627.4 1138.2,629.1 1137.4,631.3 1136.2,633.3 1134.5,635.0 1134.5,637.0 1134.6,639.0 1134.6,641.0 1134.5,643.0 1134.5,645.0 1135.1,647.0 1135.1,649.0 1135.5,651.0 1135.5,653.0 1135.8,655.0 1136.5,657.0 1136.0,659.0 1136.1,661.0 1136.2,663.0 1135.8,665.0 1135.7,667.3 1134.4,669.1 1134.1,671.3 1132.9,673.1 1131.8,675.0 1132.7,676.9 1133.2,678.9 1133.2,681.0 1134.2,682.9 1134.5,685.0 1134.6,687.0 1134.5,689.0 1135.5,691.0 1135.0,693.0 1135.1,695.0 1135.9,696.9 1136.6,698.9 1137.0,700.9 1137.3,703.0 1137.7,705.0 1139.5,708.0 1141.6,709.4 1143.6,711.1 1145.3,713.0 1145.9,715.5 1145.3,718.0 1142.6,719.3 1140.0,720.8 1138.2,722.1 1136.0,722.9 1134.0,723.9 1132.3,725.4 1130.0,725.9 1128.5,727.6 1126.9,729.0 1125.4,730.6 1123.8,732.2 1121.8,733.3 1120.0,734.5 1119.1,736.5 1117.7,738.1 1116.5,739.9 1115.0,741.4 1113.7,743.2 1112.0,744.5 1110.4,746.0 1108.8,747.4 1107.0,748.7 1104.7,747.6 1103.2,745.9 1101.3,744.4 1100.0,742.3 1097.3,742.4 1095.0,741.0 1092.7,741.1 1090.3,741.4 1088.0,741.0 1086.4,743.0 1084.4,744.4 1082.0,745.3 1080.0,747.0 1078.0,748.7 1076.0,749.0 1074.0,749.6 1072.0,749.6 1070.0,750.1 1068.0,750.4 1066.0,750.2 1064.0,750.7 1062.0,750.7 1060.0,750.0 1058.0,750.6 1056.0,749.8 1054.0,750.2 1052.0,750.1 1050.0,749.5 1048.0,749.1 1045.9,749.5 1043.9,749.3 1042.0,748.2 1039.9,748.6 1038.0,747.7 1036.0,747.5 1033.9,747.6 1031.9,747.2 1030.0,746.2 1028.0,745.0 1025.9,744.0 1023.8,742.9 1021.9,741.6 1020.0,740.3 1018.0,739.1 1016.0,739.0 1013.9,739.1 1012.0,738.2 1010.0,738.5 1008.0,737.9 1005.9,738.3 1003.6,738.1 1001.5,738.6 999.4,739.1 997.2,739.2 995.0,739.1 992.8,739.4 990.9,740.8 988.7,741.1 986.6,741.7 984.3,741.4 982.2,742.0 980.0,742.4 978.0,742.9 976.2,744.2 974.0,744.4 972.0,744.9 970.1,745.8 968.0,746.2 965.6,745.3 963.6,743.7 962.0,741.8 960.0,740.3 958.8,738.2 956.9,736.6 955.9,734.3 955.0,732.1 952.7,732.8 950.3,732.4 948.0,732.7 946.6,734.5 945.9,736.7 944.4,738.4 942.9,740.0 942.4,742.4 940.9,744.0 939.7,746.0 938.0,747.5 936.0,747.7 934.1,748.8 932.0,748.3 930.0,748.8 927.6,748.1 925.9,746.5 923.9,745.1 922.0,743.7 920.0,742.5 918.0,741.4 916.7,739.4 915.0,737.9 912.5,737.8 910.0,737.9 907.9,738.8 905.7,739.0 903.5,739.4 901.3,740.0 899.1,740.4 897.0,741.1 895.5,739.7 893.9,738.4 892.4,737.0 890.6,735.9 889.4,734.2 888.0,732.7 886.4,734.4 884.5,735.6 882.8,737.2 881.0,738.5 878.9,739.2 877.0,740.3 875.0,741.1 872.8,741.1 870.8,742.0 868.6,742.0 866.4,741.8 864.3,742.3 862.2,742.9 860.0,742.4 858.4,741.0 856.3,740.3 854.9,738.7 853.2,737.4 851.3,736.4 850.0,734.6 847.8,734.5 845.7,734.4 843.5,734.3 841.3,734.3 839.3,733.4 837.1,733.6 835.0,732.7 832.8,733.1 830.7,733.0 828.6,732.6 826.4,732.5 824.3,732.1 822.1,732.1 820.0,732.1 817.6,732.9 815.5,734.5 813.0,735.0 811.8,736.6 810.6,738.2 809.3,739.7 808.7,741.8 807.0,743.0 804.7,743.7 802.3,743.5 800.0,743.0 797.9,743.2 795.7,743.3 793.6,743.5 791.4,743.8 789.3,743.7 787.2,744.1 785.0,744.0 783.0,744.0 781.0,744.5 779.0,744.4 777.0,743.9 775.0,743.5 773.0,744.1 771.0,743.3 769.0,743.3 767.0,743.0 765.3,741.3 763.3,740.1 761.4,738.7 759.6,737.2 758.0,735.5 755.7,736.0 753.4,736.8 751.0,737.0 749.4,738.5 748.0,740.3 746.4,741.8 745.0,743.5 742.5,743.9 740.0,744.0 737.4,745.0 735.0,746.2 732.8,746.2 730.7,746.7 728.6,746.8 726.5,747.3 724.3,747.5 722.2,747.9 720.0,747.5 718.0,746.5 716.3,745.1 714.6,743.8 713.2,742.0 711.6,740.6 710.0,739.1 707.8,739.4 706.0,738.1 703.9,738.1 701.9,737.5 700.0,736.6 697.9,737.5 696.3,739.3 694.3,740.4 692.2,741.2 690.3,742.4 688.0,743.0 685.7,742.4 684.0,740.6 681.8,739.8 679.8,738.6 678.0,737.2 676.3,739.0 674.3,740.3 672.3,741.6 670.2,742.7 668.0,743.7 666.0,744.4 664.0,744.2 662.0,744.2 660.0,743.7 657.9,743.5 655.7,743.2 653.6,743.1 651.4,743.1 649.3,742.7 647.1,743.2 645.0,742.4 643.0,740.9 641.2,739.2 639.4,737.4 638.0,735.3 636.2,736.7 634.1,737.5 631.9,738.0 630.0,739.1 627.6,740.0 625.0,739.8 623.0,739.1 621.3,737.8 619.6,736.7 618.0,735.3 616.1,736.1 614.0,735.8 612.1,736.8 610.0,736.6 608.4,737.9 606.6,739.1 605.0,740.5 603.7,742.2 601.7,743.0 600.0,744.3 598.1,745.2 596.1,745.8 594.1,745.7 592.0,746.0 590.0,746.2 587.8,746.3 585.7,746.3 583.5,746.3 581.4,745.9 579.3,745.8 577.2,745.0 575.0,745.0 572.9,744.9 570.8,744.9 568.7,745.4 566.7,744.9 564.6,745.1 562.5,744.5 560.4,744.5 558.3,744.6 556.2,744.9 554.2,744.9 552.1,744.8 550.0,744.3 547.9,744.7 545.8,745.2 543.6,745.4 541.5,745.6 539.3,745.6 537.2,746.6 535.0,746.2 533.8,744.2 531.8,742.7 530.6,740.7 530.0,738.4 527.6,737.0 525.0,735.9 522.7,736.2 520.3,736.5 518.0,735.9 515.9,736.9 513.7,736.6 511.5,736.6 509.3,736.8 507.2,737.7 505.0,737.2 503.0,737.2 501.0,737.6 499.0,737.1 497.0,737.5 495.0,737.2 492.8,737.8 490.7,736.8 488.5,737.3 486.4,736.8 484.2,737.0 482.1,736.6 480.0,735.9 478.0,736.8 476.3,738.3 474.1,738.9 471.9,739.3 470.0,740.4 468.0,740.6 466.1,741.5 464.0,741.8 462.0,742.1 460.0,742.4 458.1,743.2 456.3,744.2 454.5,745.0 452.8,746.3 450.6,746.4 449.1,747.9 447.0,748.2 445.1,747.0 444.3,745.0 442.3,743.9 441.0,742.2 440.0,740.3 438.4,738.8 437.9,736.6 436.8,734.8 435.8,733.0 435.0,731.0 433.2,732.2 431.1,732.2 429.0,732.4 427.0,732.7 425.0,733.1 423.0,733.2 421.0,733.2 419.0,733.5 417.1,734.4 415.0,734.0 412.9,734.3 410.8,735.1 408.6,734.6 406.4,734.8 404.3,735.2 402.1,735.1 400.0,735.3 397.9,735.5 395.7,736.1 393.6,736.0 391.4,735.9 389.3,735.7 387.1,736.0 385.0,735.3 383.0,736.2 381.0,735.9 379.0,736.2 377.0,735.6 375.0,735.9 373.0,736.9 370.8,737.1 368.7,737.8 366.5,738.2 364.3,738.3 362.1,738.5 360.0,739.1 357.4,739.5 355.0,738.5 353.0,737.9 350.9,737.7 349.0,737.1 347.0,736.5 345.0,735.9 343.1,736.7 341.1,737.2 339.0,736.7 337.1,737.4 335.0,737.2 332.0,737.7 330.1,739.3 328.2,741.0 326.0,742.2 324.4,740.5 323.0,738.6 321.5,736.8 320.0,735.0 317.7,734.4 315.2,734.5 313.0,733.2 311.3,734.5 309.3,735.4 307.9,737.0 306.1,738.2 304.0,738.7 302.0,739.6 299.6,740.6 297.3,741.8 295.0,742.9 293.0,742.5 291.0,742.4 289.0,741.8 287.0,741.6 285.0,741.3 283.0,740.9 280.8,741.1 278.6,741.2 276.4,740.8 274.3,740.2 272.1,740.0 270.0,739.6 267.9,740.1 265.7,740.2 263.5,740.4 261.3,740.3 259.2,740.8 257.0,740.9 255.0,741.6 253.0,740.6 251.0,740.9 249.0,740.9 247.0,741.1 245.0,740.3 243.0,740.3 241.0,740.4 239.0,740.3 237.0,740.5 235.0,740.3 233.0,740.9 231.1,741.8 229.1,742.1 227.1,742.5 225.0,742.2 223.0,742.0 221.0,742.0 219.0,742.7 217.0,742.9 215.0,742.2 213.0,742.2 211.0,742.1 209.0,741.2 207.0,741.3 205.0,740.9 203.0,741.6 201.0,741.5 199.0,741.6 197.0,740.9 194.8,740.0 193.5,738.0 191.8,736.5 190.0,735.1 187.0,733.6 184.7,733.7 182.4,734.2 180.0,734.0 178.1,734.7 176.1,735.2 174.1,735.2 172.0,734.9 169.9,736.5 167.6,737.7 165.0,738.4 163.5,740.1 161.9,741.7 160.0,743.0 158.0,743.1 156.0,743.5 154.1,742.4 153.0,740.5 151.0,739.5 150.0,737.5 148.0,736.6 146.0,737.1 144.0,736.9 142.0,736.8 140.0,737.0 137.8,737.4 135.6,738.1 133.3,738.5 131.0,738.4 129.0,738.3 127.0,738.3 125.0,738.4 122.4,738.3 120.0,737.5 117.7,739.1 115.0,740.0 113.4,741.5 111.5,742.6 110.0,744.2 108.0,745.2 105.0,746.5 103.7,744.4 102.0,742.6 99.0,740.2 96.9,738.5 95.0,736.6 92.6,738.3 90.0,739.5 88.0,740.4 86.0,740.1 84.0,740.5 82.0,740.2 80.0,740.0 78.0,739.8 76.0,739.6 73.9,740.2 71.9,739.7 70.0,739.0 68.0,739.1 66.0,738.8 64.0,739.3 62.0,739.5 60.0,739.0 58.0,739.3 56.0,739.1 54.0,739.6 52.0,739.9 50.0,739.2 48.0,739.5 46.0,739.6 44.0,740.1 42.0,740.5 40.0,740.5 38.6,742.1 36.7,742.8 35.0,744.0 33.3,745.8 31.3,747.0 29.0,747.8 26.8,745.9 25.0,743.5 22.5,742.4 20.0,741.3 18.6,739.6 18.6,737.5 18.0,735.5 16.4,733.7 16.0,731.3 15.0,729.2 12.5,729.7 10.0,730.2 8.1,729.1 7.0,727.2 6.2,725.3 5.0,723.6 5.0,721.5 3.5,722.0 1.0,722.5 0.0,722.5 0.0,765.0 1164.0,765.0 1164.0,0.0" fill="#fff"/><polygon points="1140.0,7.0 1142.0,10.0 1142.0,13.0 1138.8,15.0 1137.0,18.0 1137.1,20.0 1137.0,22.0 1138.5,23.5 1140.0,25.0 1140.9,27.4 1140.9,30.0 1140.8,32.3 1141.2,34.7 1140.9,37.0 1139.7,40.0 1140.0,42.0 1139.8,44.0 1140.4,46.0 1140.0,48.0 1140.3,50.0 1141.8,51.5 1142.9,53.4 1144.3,55.0 1145.1,57.5 1146.2,60.0 1147.3,62.3 1148.5,64.4 1148.8,67.0 1149.1,69.0 1149.5,71.0 1150.3,72.9 1150.2,75.0 1149.9,77.3 1148.2,79.0 1146.0,79.9 1143.7,80.0 1141.6,81.4 1139.8,83.2 1137.2,83.6 1135.1,85.0 1134.3,87.1 1132.6,88.4 1131.2,90.0 1130.9,92.5 1130.8,95.0 1131.0,96.5 1133.9,97.3 1136.8,98.0 1136.7,100.0 1138.3,101.6 1140.3,102.9 1141.4,105.0 1141.0,107.5 1140.6,110.0 1139.0,111.6 1137.3,112.9 1135.4,113.9 1133.5,115.0 1132.5,116.9 1130.8,118.2 1129.6,120.0 1128.8,122.0 1129.5,124.0 1131.4,125.1 1133.5,126.0 1135.7,126.6 1137.5,128.0 1138.0,130.5 1139.8,131.8 1141.3,133.4 1142.9,135.0 1143.3,137.5 1143.0,140.0 1141.0,141.1 1138.9,141.8 1137.0,143.1 1134.9,143.8 1132.6,144.2 1130.5,145.0 1130.6,147.5 1129.9,150.0 1131.2,151.6 1132.4,153.2 1133.3,155.0 1133.8,157.0 1135.4,158.6 1137.4,159.8 1138.4,162.0 1139.6,164.5 1141.0,167.0 1139.2,168.8 1137.4,170.8 1135.1,172.0 1134.2,174.0 1133.7,176.1 1132.5,177.9 1131.8,180.0 1132.5,181.9 1132.9,183.9 1132.9,186.0 1133.5,187.9 1133.1,190.0 1133.6,192.0 1134.4,193.9 1134.7,195.9 1135.1,197.9 1135.1,200.0 1136.1,201.9 1137.2,203.8 1138.1,205.7 1138.4,207.9 1139.4,209.8 1139.7,212.0 1140.0,214.0 1141.1,215.9 1141.0,218.0 1141.2,220.1 1141.3,222.1 1140.8,224.1 1140.0,226.0 1139.7,228.0 1139.4,230.4 1139.3,232.8 1138.4,235.0 1137.6,237.5 1137.1,240.0 1136.8,242.1 1136.0,244.0 1135.5,246.0 1134.9,248.0 1134.5,250.0 1134.7,252.1 1133.8,254.0 1133.6,256.0 1133.2,258.0 1135.0,259.5 1137.0,260.7 1138.2,262.9 1140.1,264.2 1141.6,266.0 1141.1,268.4 1140.6,270.7 1139.8,273.0 1138.4,275.0 1139.2,277.5 1138.6,280.0 1140.4,281.7 1142.3,283.3 1144.0,285.1 1145.6,287.0 1145.6,289.4 1145.0,291.6 1143.6,293.5 1142.9,295.7 1142.3,297.8 1141.6,300.0 1141.3,302.0 1141.2,304.0 1141.0,306.1 1140.4,308.0 1139.8,310.0 1139.7,312.0 1139.0,314.1 1138.1,316.1 1137.0,318.0 1138.8,319.5 1140.6,321.0 1141.9,322.9 1143.0,325.0 1141.9,326.9 1140.7,328.6 1139.0,330.0 1138.3,332.0 1136.6,333.4 1136.2,335.6 1134.5,337.0 1133.6,340.0 1135.3,341.2 1136.6,342.8 1137.7,344.4 1138.6,346.3 1139.7,348.0 1138.6,349.9 1137.0,351.4 1136.1,353.5 1134.5,355.0 1133.9,357.5 1133.6,360.0 1135.0,361.8 1136.7,363.5 1138.1,365.3 1139.7,367.0 1138.4,368.7 1136.7,370.1 1135.2,371.7 1133.9,373.4 1132.5,375.0 1131.7,377.0 1131.3,379.1 1130.4,380.9 1130.5,383.2 1129.2,385.0 1129.8,387.0 1129.4,389.0 1129.7,391.0 1129.9,393.0 1129.9,395.0 1130.7,396.9 1131.1,399.0 1132.4,400.8 1133.2,402.8 1133.1,405.0 1134.5,406.5 1135.7,408.2 1136.6,410.0 1138.1,411.8 1139.7,413.6 1141.5,415.2 1143.0,417.0 1141.4,418.4 1140.1,420.2 1138.0,421.0 1136.3,422.2 1135.2,424.3 1133.1,425.0 1132.5,427.6 1131.2,430.0 1132.0,432.4 1133.3,434.5 1133.8,437.0 1133.1,439.0 1133.1,441.1 1133.1,443.2 1131.8,445.0 1133.7,446.6 1134.9,448.7 1135.8,451.0 1137.2,452.9 1138.4,455.0 1138.7,457.0 1139.7,458.9 1139.9,460.9 1140.5,462.9 1140.3,465.0 1140.0,467.4 1139.5,469.7 1139.0,472.0 1138.7,474.3 1137.9,476.3 1136.3,478.0 1138.1,479.4 1139.4,481.1 1140.8,482.9 1141.6,485.0 1140.8,487.3 1139.0,489.0 1138.0,491.2 1136.5,493.1 1135.1,495.0 1133.7,496.6 1132.4,498.2 1131.2,500.0 1132.4,502.3 1133.5,504.6 1134.5,507.0 1134.7,509.2 1134.6,511.4 1133.7,513.5 1133.9,515.8 1133.6,518.0 1132.5,520.0 1132.2,522.8 1130.5,525.0 1131.0,527.0 1131.2,529.0 1131.5,531.0 1131.8,533.0 1133.1,534.8 1134.4,536.5 1136.0,538.0 1137.0,540.0 1138.9,540.9 1140.4,542.3 1141.6,544.0 1143.2,545.3 1144.3,547.0 1144.4,549.1 1143.2,551.0 1143.2,553.1 1142.3,555.0 1142.7,557.1 1142.4,559.1 1142.1,561.1 1141.5,563.0 1141.0,565.0 1139.6,566.4 1138.6,568.3 1136.9,569.4 1135.8,571.1 1134.6,572.7 1132.7,573.7 1131.2,575.0 1130.0,577.1 1129.2,579.4 1127.7,581.3 1125.9,583.0 1127.0,585.0 1128.0,587.0 1129.2,589.0 1130.9,590.7 1131.9,592.7 1132.5,595.0 1133.5,597.0 1135.1,598.7 1136.3,600.6 1137.1,602.8 1137.7,605.0 1139.6,606.6 1141.5,608.1 1143.0,610.0 1143.6,612.4 1144.1,614.7 1144.9,617.0 1144.4,619.4 1143.0,621.2 1141.7,623.2 1140.3,625.0 1139.8,627.4 1138.2,629.1 1137.4,631.3 1136.2,633.3 1134.5,635.0 1134.5,637.0 1134.6,639.0 1134.6,641.0 1134.5,643.0 1134.5,645.0 1135.1,647.0 1135.1,649.0 1135.5,651.0 1135.5,653.0 1135.8,655.0 1136.5,657.0 1136.0,659.0 1136.1,661.0 1136.2,663.0 1135.8,665.0 1135.7,667.3 1134.4,669.1 1134.1,671.3 1132.9,673.1 1131.8,675.0 1132.7,676.9 1133.2,678.9 1133.2,681.0 1134.2,682.9 1134.5,685.0 1134.6,687.0 1134.5,689.0 1135.5,691.0 1135.0,693.0 1135.1,695.0 1135.9,696.9 1136.6,698.9 1137.0,700.9 1137.3,703.0 1137.7,705.0 1139.5,708.0 1141.6,709.4 1143.6,711.1 1145.3,713.0 1145.9,715.5 1145.3,718.0 1142.6,719.3 1140.0,720.8 1138.2,722.1 1136.0,722.9 1134.0,723.9 1132.3,725.4 1130.0,725.9 1128.5,727.6 1126.9,729.0 1125.4,730.6 1123.8,732.2 1121.8,733.3 1120.0,734.5 1119.1,736.5 1117.7,738.1 1116.5,739.9 1115.0,741.4 1113.7,743.2 1112.0,744.5 1110.4,746.0 1108.8,747.4 1107.0,748.7 1104.7,747.6 1103.2,745.9 1101.3,744.4 1100.0,742.3 1097.3,742.4 1095.0,741.0 1092.7,741.1 1090.3,741.4 1088.0,741.0 1086.4,743.0 1084.4,744.4 1082.0,745.3 1080.0,747.0 1078.0,748.7 1076.0,749.0 1074.0,749.6 1072.0,749.6 1070.0,750.1 1068.0,750.4 1066.0,750.2 1064.0,750.7 1062.0,750.7 1060.0,750.0 1058.0,750.6 1056.0,749.8 1054.0,750.2 1052.0,750.1 1050.0,749.5 1048.0,749.1 1045.9,749.5 1043.9,749.3 1042.0,748.2 1039.9,748.6 1038.0,747.7 1036.0,747.5 1033.9,747.6 1031.9,747.2 1030.0,746.2 1028.0,745.0 1025.9,744.0 1023.8,742.9 1021.9,741.6 1020.0,740.3 1018.0,739.1 1016.0,739.0 1013.9,739.1 1012.0,738.2 1010.0,738.5 1008.0,737.9 1005.9,738.3 1003.6,738.1 1001.5,738.6 999.4,739.1 997.2,739.2 995.0,739.1 992.8,739.4 990.9,740.8 988.7,741.1 986.6,741.7 984.3,741.4 982.2,742.0 980.0,742.4 978.0,742.9 976.2,744.2 974.0,744.4 972.0,744.9 970.1,745.8 968.0,746.2 965.6,745.3 963.6,743.7 962.0,741.8 960.0,740.3 958.8,738.2 956.9,736.6 955.9,734.3 955.0,732.1 952.7,732.8 950.3,732.4 948.0,732.7 946.6,734.5 945.9,736.7 944.4,738.4 942.9,740.0 942.4,742.4 940.9,744.0 939.7,746.0 938.0,747.5 936.0,747.7 934.1,748.8 932.0,748.3 930.0,748.8 927.6,748.1 925.9,746.5 923.9,745.1 922.0,743.7 920.0,742.5 918.0,741.4 916.7,739.4 915.0,737.9 912.5,737.8 910.0,737.9 907.9,738.8 905.7,739.0 903.5,739.4 901.3,740.0 899.1,740.4 897.0,741.1 895.5,739.7 893.9,738.4 892.4,737.0 890.6,735.9 889.4,734.2 888.0,732.7 886.4,734.4 884.5,735.6 882.8,737.2 881.0,738.5 878.9,739.2 877.0,740.3 875.0,741.1 872.8,741.1 870.8,742.0 868.6,742.0 866.4,741.8 864.3,742.3 862.2,742.9 860.0,742.4 858.4,741.0 856.3,740.3 854.9,738.7 853.2,737.4 851.3,736.4 850.0,734.6 847.8,734.5 845.7,734.4 843.5,734.3 841.3,734.3 839.3,733.4 837.1,733.6 835.0,732.7 832.8,733.1 830.7,733.0 828.6,732.6 826.4,732.5 824.3,732.1 822.1,732.1 820.0,732.1 817.6,732.9 815.5,734.5 813.0,735.0 811.8,736.6 810.6,738.2 809.3,739.7 808.7,741.8 807.0,743.0 804.7,743.7 802.3,743.5 800.0,743.0 797.9,743.2 795.7,743.3 793.6,743.5 791.4,743.8 789.3,743.7 787.2,744.1 785.0,744.0 783.0,744.0 781.0,744.5 779.0,744.4 777.0,743.9 775.0,743.5 773.0,744.1 771.0,743.3 769.0,743.3 767.0,743.0 765.3,741.3 763.3,740.1 761.4,738.7 759.6,737.2 758.0,735.5 755.7,736.0 753.4,736.8 751.0,737.0 749.4,738.5 748.0,740.3 746.4,741.8 745.0,743.5 742.5,743.9 740.0,744.0 737.4,745.0 735.0,746.2 732.8,746.2 730.7,746.7 728.6,746.8 726.5,747.3 724.3,747.5 722.2,747.9 720.0,747.5 718.0,746.5 716.3,745.1 714.6,743.8 713.2,742.0 711.6,740.6 710.0,739.1 707.8,739.4 706.0,738.1 703.9,738.1 701.9,737.5 700.0,736.6 697.9,737.5 696.3,739.3 694.3,740.4 692.2,741.2 690.3,742.4 688.0,743.0 685.7,742.4 684.0,740.6 681.8,739.8 679.8,738.6 678.0,737.2 676.3,739.0 674.3,740.3 672.3,741.6 670.2,742.7 668.0,743.7 666.0,744.4 664.0,744.2 662.0,744.2 660.0,743.7 657.9,743.5 655.7,743.2 653.6,743.1 651.4,743.1 649.3,742.7 647.1,743.2 645.0,742.4 643.0,740.9 641.2,739.2 639.4,737.4 638.0,735.3 636.2,736.7 634.1,737.5 631.9,738.0 630.0,739.1 627.6,740.0 625.0,739.8 623.0,739.1 621.3,737.8 619.6,736.7 618.0,735.3 616.1,736.1 614.0,735.8 612.1,736.8 610.0,736.6 608.4,737.9 606.6,739.1 605.0,740.5 603.7,742.2 601.7,743.0 600.0,744.3 598.1,745.2 596.1,745.8 594.1,745.7 592.0,746.0 590.0,746.2 587.8,746.3 585.7,746.3 583.5,746.3 581.4,745.9 579.3,745.8 577.2,745.0 575.0,745.0 572.9,744.9 570.8,744.9 568.7,745.4 566.7,744.9 564.6,745.1 562.5,744.5 560.4,744.5 558.3,744.6 556.2,744.9 554.2,744.9 552.1,744.8 550.0,744.3 547.9,744.7 545.8,745.2 543.6,745.4 541.5,745.6 539.3,745.6 537.2,746.6 535.0,746.2 533.8,744.2 531.8,742.7 530.6,740.7 530.0,738.4 527.6,737.0 525.0,735.9 522.7,736.2 520.3,736.5 518.0,735.9 515.9,736.9 513.7,736.6 511.5,736.6 509.3,736.8 507.2,737.7 505.0,737.2 503.0,737.2 501.0,737.6 499.0,737.1 497.0,737.5 495.0,737.2 492.8,737.8 490.7,736.8 488.5,737.3 486.4,736.8 484.2,737.0 482.1,736.6 480.0,735.9 478.0,736.8 476.3,738.3 474.1,738.9 471.9,739.3 470.0,740.4 468.0,740.6 466.1,741.5 464.0,741.8 462.0,742.1 460.0,742.4 458.1,743.2 456.3,744.2 454.5,745.0 452.8,746.3 450.6,746.4 449.1,747.9 447.0,748.2 445.1,747.0 444.3,745.0 442.3,743.9 441.0,742.2 440.0,740.3 438.4,738.8 437.9,736.6 436.8,734.8 435.8,733.0 435.0,731.0 433.2,732.2 431.1,732.2 429.0,732.4 427.0,732.7 425.0,733.1 423.0,733.2 421.0,733.2 419.0,733.5 417.1,734.4 415.0,734.0 412.9,734.3 410.8,735.1 408.6,734.6 406.4,734.8 404.3,735.2 402.1,735.1 400.0,735.3 397.9,735.5 395.7,736.1 393.6,736.0 391.4,735.9 389.3,735.7 387.1,736.0 385.0,735.3 383.0,736.2 381.0,735.9 379.0,736.2 377.0,735.6 375.0,735.9 373.0,736.9 370.8,737.1 368.7,737.8 366.5,738.2 364.3,738.3 362.1,738.5 360.0,739.1 357.4,739.5 355.0,738.5 353.0,737.9 350.9,737.7 349.0,737.1 347.0,736.5 345.0,735.9 343.1,736.7 341.1,737.2 339.0,736.7 337.1,737.4 335.0,737.2 332.0,737.7 330.1,739.3 328.2,741.0 326.0,742.2 324.4,740.5 323.0,738.6 321.5,736.8 320.0,735.0 317.7,734.4 315.2,734.5 313.0,733.2 311.3,734.5 309.3,735.4 307.9,737.0 306.1,738.2 304.0,738.7 302.0,739.6 299.6,740.6 297.3,741.8 295.0,742.9 293.0,742.5 291.0,742.4 289.0,741.8 287.0,741.6 285.0,741.3 283.0,740.9 280.8,741.1 278.6,741.2 276.4,740.8 274.3,740.2 272.1,740.0 270.0,739.6 267.9,740.1 265.7,740.2 263.5,740.4 261.3,740.3 259.2,740.8 257.0,740.9 255.0,741.6 253.0,740.6 251.0,740.9 249.0,740.9 247.0,741.1 245.0,740.3 243.0,740.3 241.0,740.4 239.0,740.3 237.0,740.5 235.0,740.3 233.0,740.9 231.1,741.8 229.1,742.1 227.1,742.5 225.0,742.2 223.0,742.0 221.0,742.0 219.0,742.7 217.0,742.9 215.0,742.2 213.0,742.2 211.0,742.1 209.0,741.2 207.0,741.3 205.0,740.9 203.0,741.6 201.0,741.5 199.0,741.6 197.0,740.9 194.8,740.0 193.5,738.0 191.8,736.5 190.0,735.1 187.0,733.6 184.7,733.7 182.4,734.2 180.0,734.0 178.1,734.7 176.1,735.2 174.1,735.2 172.0,734.9 169.9,736.5 167.6,737.7 165.0,738.4 163.5,740.1 161.9,741.7 160.0,743.0 158.0,743.1 156.0,743.5 154.1,742.4 153.0,740.5 151.0,739.5 150.0,737.5 148.0,736.6 146.0,737.1 144.0,736.9 142.0,736.8 140.0,737.0 137.8,737.4 135.6,738.1 133.3,738.5 131.0,738.4 129.0,738.3 127.0,738.3 125.0,738.4 122.4,738.3 120.0,737.5 117.7,739.1 115.0,740.0 113.4,741.5 111.5,742.6 110.0,744.2 108.0,745.2 105.0,746.5 103.7,744.4 102.0,742.6 99.0,740.2 96.9,738.5 95.0,736.6 92.6,738.3 90.0,739.5 88.0,740.4 86.0,740.1 84.0,740.5 82.0,740.2 80.0,740.0 78.0,739.8 76.0,739.6 73.9,740.2 71.9,739.7 70.0,739.0 68.0,739.1 66.0,738.8 64.0,739.3 62.0,739.5 60.0,739.0 58.0,739.3 56.0,739.1 54.0,739.6 52.0,739.9 50.0,739.2 48.0,739.5 46.0,739.6 44.0,740.1 42.0,740.5 40.0,740.5 38.6,742.1 36.7,742.8 35.0,744.0 33.3,745.8 31.3,747.0 29.0,747.8 26.8,745.9 25.0,743.5 22.5,742.4 20.0,741.3 18.6,739.6 18.6,737.5 18.0,735.5 16.4,733.7 16.0,731.3 15.0,729.2 12.5,729.7 10.0,730.2 8.1,729.1 7.0,727.2 6.2,725.3 5.0,723.6 5.0,721.5 3.5,722.0 1.0,722.5 0.0,722.5 0.0,721.2 1.0,721.2 3.5,720.5 5.0,720.5 7.0,720.3 10.0,720.3 11.6,721.8 13.3,723.2 13.9,725.4 15.0,727.2 16.7,729.4 17.3,731.9 18.0,734.5 19.3,736.2 19.1,738.4 20.0,740.3 21.1,738.1 22.8,736.7 25.0,735.8 25.6,733.6 27.2,732.2 29.0,731.0 31.0,730.2 33.0,730.5 35.0,731.0 37.2,729.2 40.0,729.3 42.0,729.6 44.0,728.5 46.0,728.3 48.0,729.6 50.0,729.3 52.0,729.2 54.0,728.3 56.0,729.2 58.0,729.3 60.0,728.9 61.9,729.7 64.0,729.7 66.1,729.3 68.2,729.2 70.0,730.6 72.1,730.9 74.1,730.6 75.9,729.3 77.9,728.7 80.0,729.3 82.0,729.6 84.0,728.5 86.0,728.3 88.0,728.4 90.0,729.3 91.3,731.5 94.0,732.4 95.0,734.9 97.8,736.3 99.0,739.2 100.0,737.2 100.5,734.9 102.0,733.2 105.0,733.0 106.0,730.2 108.0,728.0 110.3,727.8 112.7,727.7 115.0,728.0 117.5,728.3 120.0,728.5 122.4,729.5 125.0,730.2 127.0,729.3 128.7,727.6 131.0,727.2 133.2,727.8 135.5,727.5 137.8,727.0 140.0,727.2 141.5,728.8 143.3,730.2 144.7,731.9 147.0,732.7 148.0,734.9 150.0,735.5 152.0,734.4 153.6,732.6 156.0,732.3 157.6,730.7 158.4,728.4 160.0,726.8 162.5,726.2 165.0,725.5 167.2,724.4 169.4,723.0 172.0,722.9 174.1,722.4 176.1,723.0 178.0,723.8 180.0,724.2 182.5,724.7 183.4,727.2 185.5,728.1 187.0,729.8 188.7,731.3 190.0,733.2 192.2,732.0 194.4,731.1 197.0,731.3 199.2,731.2 200.9,732.9 202.9,733.4 205.0,733.8 207.0,733.7 209.0,733.0 211.0,734.0 213.0,733.5 215.0,733.8 216.7,732.1 218.8,731.8 221.1,732.1 223.0,731.4 225.0,730.6 227.0,730.3 228.9,729.4 231.0,729.7 233.0,729.4 235.0,729.3 236.9,730.4 239.0,730.2 241.0,731.0 242.9,731.9 245.0,731.9 247.0,731.2 248.6,729.5 251.1,730.3 252.8,728.6 255.0,728.5 257.0,728.0 259.3,727.8 261.3,729.1 263.7,728.2 265.7,729.6 267.9,729.8 270.0,730.6 272.3,730.2 274.4,730.9 276.6,731.6 278.8,731.7 280.9,732.4 283.0,733.2 284.8,731.9 287.2,731.9 288.9,730.3 290.6,728.7 292.7,728.1 295.0,728.0 297.5,727.0 299.5,725.1 302.0,724.2 304.2,724.7 306.4,723.0 308.6,723.9 310.8,724.1 313.0,724.2 315.0,725.6 316.3,727.7 317.0,730.1 319.5,731.2 320.0,733.8 321.7,732.2 323.9,731.5 326.0,730.6 327.7,728.7 329.9,727.4 332.0,726.1 335.0,726.3 337.0,726.5 339.0,727.2 341.1,726.9 343.1,727.1 345.0,728.2 347.2,728.1 349.0,729.3 350.9,730.5 353.2,730.3 355.0,731.4 356.7,730.2 358.2,728.7 360.0,727.6 362.1,726.8 364.2,726.4 366.3,725.8 368.5,725.8 370.6,725.4 372.7,724.9 375.0,725.6 376.9,724.6 379.0,725.3 381.0,724.7 382.9,723.8 385.0,724.3 387.2,724.1 389.3,724.5 391.5,723.8 393.6,724.3 395.7,725.1 397.9,724.9 400.0,725.6 402.2,725.8 404.3,725.0 406.4,724.5 408.5,724.6 410.7,724.0 412.8,723.7 415.0,724.3 417.0,723.7 419.1,723.8 421.0,722.6 423.1,722.4 425.1,722.0 427.0,721.1 429.2,721.6 430.9,723.3 433.1,723.9 435.0,725.0 436.4,726.8 437.2,728.8 438.2,730.7 437.9,733.1 438.2,735.4 440.4,736.9 440.0,739.3 442.0,738.3 443.1,736.1 444.6,734.4 447.0,734.0 449.2,733.7 451.3,732.9 453.6,732.7 455.6,731.5 457.8,731.3 460.0,730.8 462.0,730.6 464.1,730.3 466.1,729.9 467.8,728.3 470.0,728.8 471.9,727.8 474.0,728.1 476.0,727.9 478.0,727.4 480.0,726.9 482.3,726.2 484.3,727.2 486.4,728.1 488.6,727.5 490.8,727.5 492.9,728.3 495.0,728.8 497.0,728.9 498.9,727.6 500.9,727.5 502.9,726.9 505.0,727.6 507.2,727.7 509.3,727.2 511.5,726.9 513.6,726.2 515.8,725.8 518.0,726.3 520.2,726.8 521.7,728.2 523.4,729.5 525.0,730.8 526.1,732.6 528.3,733.5 528.8,735.7 530.0,737.4 532.4,736.4 535.0,735.9 537.1,734.7 539.3,735.7 541.4,735.6 543.6,735.7 545.6,734.0 547.9,735.2 550.0,734.6 552.1,733.7 554.2,734.7 556.3,734.8 558.3,735.0 560.4,734.6 562.5,734.4 564.6,734.7 566.7,734.6 568.7,736.0 570.9,735.1 572.9,736.2 575.0,735.9 577.1,735.6 579.3,735.2 581.4,736.1 583.6,736.0 585.7,734.8 587.9,736.0 590.0,735.9 591.1,733.7 593.3,732.9 594.8,731.2 596.8,730.1 597.8,727.8 600.0,726.9 601.9,726.1 603.9,725.6 606.1,725.9 607.7,723.7 610.0,724.3 612.2,725.4 613.0,727.8 614.4,729.8 616.2,731.2 618.0,732.7 619.2,730.5 621.8,729.8 622.6,727.2 625.0,726.3 627.6,725.5 630.0,724.3 631.9,725.7 633.7,727.2 634.8,729.3 637.0,730.5 638.0,732.7 640.4,733.2 642.7,733.8 645.0,734.6 647.1,735.3 649.3,734.5 651.5,734.2 653.6,735.0 655.8,734.4 657.9,735.7 660.0,735.9 661.3,734.3 662.1,732.3 664.1,731.2 665.4,729.6 667.1,728.3 668.0,726.3 669.8,727.4 671.3,728.7 672.9,730.0 675.1,730.4 676.1,732.6 678.0,733.4 680.2,732.7 682.0,731.4 683.8,729.8 685.6,728.5 688.0,728.2 690.0,727.6 692.0,727.1 694.0,727.0 696.0,728.3 698.0,728.1 700.0,727.6 701.3,729.3 702.6,731.0 705.1,731.5 706.5,733.1 707.9,734.7 708.2,737.3 710.0,738.5 711.9,737.2 713.9,737.1 715.9,736.9 718.0,737.4 720.0,737.2 722.0,736.2 724.4,736.6 726.3,734.9 728.4,734.4 730.6,734.0 732.7,733.3 735.0,733.4 736.4,735.0 738.0,736.2 740.0,737.0 741.9,735.2 743.3,733.0 745.0,731.0 745.8,728.8 748.3,728.4 749.9,727.1 751.0,725.3 752.1,727.3 754.6,728.1 754.8,730.8 757.0,731.9 758.0,734.0 760.2,734.5 762.5,734.5 764.8,734.3 767.0,735.0 769.0,734.3 771.0,734.8 773.0,734.1 775.0,734.3 777.0,734.1 779.0,734.8 781.0,733.8 783.0,734.4 785.0,735.0 787.1,734.2 789.3,734.2 791.4,733.5 793.6,734.6 795.7,734.3 797.8,733.2 800.0,734.0 801.8,733.0 803.1,731.4 804.7,730.0 807.0,730.0 807.6,727.9 809.5,726.7 810.7,725.0 812.3,723.5 813.0,721.5 815.5,721.0 817.6,722.7 820.0,723.0 822.1,721.8 824.3,722.3 826.4,722.9 828.6,722.3 830.7,721.8 832.8,722.3 835.0,722.4 837.1,723.3 838.7,724.9 841.0,725.5 843.0,726.5 844.7,727.9 846.7,729.0 848.1,730.9 850.0,732.1 852.0,732.7 854.0,732.5 856.0,732.9 858.0,732.8 860.0,732.7 862.1,731.9 864.1,730.9 866.4,730.8 868.4,729.8 870.5,729.0 873.0,729.9 875.0,728.8 876.0,726.5 877.4,724.5 878.7,722.4 881.0,721.1 882.0,723.2 883.8,724.7 885.2,726.5 886.4,728.5 888.0,730.1 890.3,729.4 892.5,729.9 894.8,730.3 897.0,730.8 899.1,730.1 901.4,730.6 903.5,730.5 905.6,728.8 907.8,729.3 910.0,729.5 911.3,731.6 913.9,732.3 915.0,734.6 916.5,736.1 918.4,737.0 920.3,737.9 922.0,739.1 924.0,738.9 926.0,740.0 928.1,738.6 930.0,739.8 931.0,738.0 931.1,735.8 931.7,733.7 933.4,732.2 933.9,730.2 935.3,728.6 935.9,726.6 936.6,724.6 938.0,723.0 940.1,723.2 942.0,722.4 944.0,721.7 945.8,720.7 948.0,721.1 950.1,722.2 951.2,724.1 951.9,726.4 953.3,728.0 955.0,729.5 955.9,731.5 958.0,732.9 957.7,735.5 959.2,737.2 960.0,739.3 961.3,737.6 963.3,736.8 964.5,735.0 966.1,733.7 968.0,732.7 970.0,732.6 972.0,732.0 974.1,732.2 976.0,731.4 978.1,731.7 980.0,730.8 982.2,731.0 984.2,729.5 986.5,729.9 988.6,729.7 990.5,727.9 992.8,728.3 995.0,728.2 997.2,728.2 999.4,728.1 1001.5,729.2 1003.6,729.6 1005.8,729.9 1008.0,729.5 1009.6,730.8 1011.7,731.6 1013.3,733.0 1015.4,733.7 1016.7,735.5 1018.0,737.2 1020.0,737.7 1022.1,737.0 1023.9,738.7 1026.1,737.7 1028.0,739.1 1030.0,739.1 1032.0,739.1 1034.1,738.7 1036.0,739.7 1038.0,739.5 1040.1,738.9 1042.0,740.4 1044.1,739.7 1046.0,740.6 1048.1,740.4 1050.0,741.1 1052.0,740.0 1054.0,741.6 1056.0,740.3 1058.0,740.9 1060.0,741.4 1062.0,741.2 1064.1,740.9 1066.0,742.0 1068.0,742.3 1069.3,740.6 1071.1,739.4 1073.2,738.7 1074.2,736.5 1076.5,736.0 1078.0,734.5 1079.3,731.7 1082.0,730.2 1084.0,729.6 1086.0,729.1 1088.0,730.2 1089.6,731.5 1091.4,732.6 1093.0,733.9 1095.0,734.5 1096.2,736.2 1097.8,737.7 1098.6,739.7 1100.0,741.3 1101.9,740.2 1102.9,737.9 1105.1,737.2 1107.0,736.2 1108.3,734.5 1108.2,732.1 1110.1,730.8 1110.1,728.4 1112.3,727.2 1112.3,724.9 1114.0,723.4 1115.0,721.6 1117.0,720.2 1117.6,717.4 1120.0,716.5 1121.7,715.0 1124.1,715.4 1125.7,713.4 1127.6,712.6 1130.0,713.0 1131.9,712.0 1133.6,710.5 1136.1,711.2 1137.7,709.5 1140.0,709.6 1138.5,708.0 1136.2,707.6 1134.0,707.1 1132.5,705.0 1130.5,703.5 1130.4,700.8 1128.0,699.6 1127.7,697.0 1126.6,695.0 1125.9,693.1 1126.3,690.9 1125.1,689.1 1124.2,687.2 1124.6,685.0 1123.5,683.1 1124.3,680.9 1122.9,679.1 1123.6,676.9 1122.7,675.0 1122.2,673.0 1122.2,671.0 1122.7,669.0 1122.0,667.0 1122.0,665.0 1123.0,663.1 1123.7,661.1 1123.7,658.9 1124.9,657.1 1125.3,655.0 1125.1,653.0 1124.5,651.0 1124.5,649.0 1125.5,647.0 1125.3,645.0 1124.8,643.0 1124.3,641.1 1125.1,638.9 1124.1,637.0 1124.0,635.0 1124.2,633.0 1124.2,630.9 1125.0,629.0 1125.1,626.9 1125.9,625.0 1127.1,622.9 1128.6,621.0 1129.4,618.7 1131.2,617.0 1131.7,614.5 1132.5,612.2 1133.8,610.0 1133.8,607.4 1133.1,605.0 1131.2,603.9 1131.1,601.4 1128.9,600.4 1128.0,598.6 1127.5,596.4 1125.9,595.0 1123.9,593.8 1123.1,592.0 1122.7,589.8 1121.8,587.9 1120.3,586.5 1118.9,584.9 1118.1,583.0 1117.8,581.0 1118.0,579.0 1117.8,577.0 1117.4,575.0 1117.7,572.6 1118.7,570.6 1120.5,568.9 1121.8,567.1 1122.7,565.0 1123.5,563.0 1125.7,562.4 1126.3,560.1 1127.9,558.9 1129.0,557.1 1131.0,556.4 1132.5,555.0 1131.3,553.1 1132.7,551.0 1131.7,549.0 1131.8,547.0 1131.8,544.7 1132.8,543.0 1135.1,541.9 1135.8,540.0 1134.3,538.4 1131.7,538.1 1130.2,536.5 1128.8,534.6 1127.3,533.0 1126.3,530.8 1123.8,529.6 1123.0,527.2 1122.0,525.0 1121.8,522.5 1121.4,520.0 1122.2,517.9 1122.0,515.6 1122.6,513.5 1122.6,511.2 1124.0,509.3 1124.0,507.0 1123.9,504.3 1125.2,502.1 1126.6,500.0 1124.8,498.6 1124.0,496.3 1122.0,495.0 1122.3,493.0 1121.8,491.0 1121.0,489.0 1121.9,487.0 1122.0,485.0 1123.5,483.2 1125.7,482.9 1127.1,481.1 1129.8,481.5 1131.5,480.2 1132.9,478.4 1135.1,478.0 1133.5,476.6 1131.7,475.6 1129.3,475.4 1127.7,474.0 1126.6,472.0 1127.1,469.6 1127.9,467.3 1128.6,465.0 1128.4,462.9 1129.2,461.0 1128.3,458.9 1129.7,457.0 1129.9,455.0 1129.5,453.0 1128.7,451.0 1127.7,449.2 1128.1,446.9 1127.3,445.0 1126.2,442.7 1123.9,441.3 1122.6,439.2 1121.4,437.0 1121.7,434.6 1122.7,432.4 1122.7,430.0 1121.5,428.0 1119.3,426.9 1118.1,425.0 1118.9,422.5 1121.2,421.1 1122.6,419.0 1124.0,417.0 1126.0,416.1 1127.5,414.1 1129.7,413.5 1131.9,412.8 1133.6,411.4 1135.4,410.0 1133.1,409.2 1131.1,407.9 1129.4,406.1 1127.3,405.0 1126.6,402.9 1125.8,400.9 1124.5,399.0 1123.8,396.9 1122.7,395.0 1121.6,393.2 1120.9,391.1 1121.1,388.9 1119.0,387.3 1119.4,385.0 1118.7,383.0 1119.8,381.0 1119.6,379.0 1118.9,376.9 1120.0,375.0 1120.4,373.0 1120.0,370.7 1121.1,368.9 1122.0,367.0 1123.1,364.9 1125.6,364.9 1127.4,363.8 1129.0,362.4 1131.0,361.6 1132.4,360.0 1130.8,357.7 1131.2,355.0 1128.9,354.3 1127.2,352.9 1125.9,351.0 1124.7,349.1 1122.7,348.0 1123.6,345.8 1125.6,344.9 1127.0,343.3 1129.3,342.8 1130.6,341.1 1132.4,340.0 1129.8,339.4 1128.6,337.0 1127.2,335.3 1126.0,333.5 1124.3,332.0 1123.3,330.0 1123.0,327.3 1124.6,325.0 1126.6,324.1 1128.4,322.8 1130.3,321.6 1132.2,320.5 1133.5,318.5 1135.8,318.0 1134.0,316.6 1131.9,315.3 1130.4,313.4 1128.6,312.0 1128.0,309.9 1129.6,308.1 1129.0,305.9 1129.0,303.9 1129.4,301.9 1130.5,300.0 1130.6,297.7 1131.3,295.5 1132.4,293.5 1133.3,291.4 1133.6,289.1 1134.5,287.0 1134.8,284.4 1136.2,282.2 1137.4,280.0 1136.6,277.3 1135.1,275.0 1133.9,272.9 1132.1,271.3 1129.5,270.4 1128.1,268.4 1127.3,266.0 1127.5,263.4 1129.7,262.0 1130.5,259.8 1132.0,258.0 1130.6,256.0 1128.8,254.4 1126.9,253.1 1124.5,252.2 1123.3,250.0 1123.7,248.0 1124.0,246.0 1122.9,243.9 1123.8,242.0 1124.0,240.0 1125.3,238.3 1126.6,236.7 1127.9,235.0 1127.0,232.8 1126.3,230.5 1126.6,228.0 1126.6,225.7 1127.5,223.7 1128.2,221.7 1130.0,220.1 1130.5,218.0 1129.4,216.0 1130.2,214.0 1130.5,212.0 1129.6,210.1 1129.1,207.9 1128.2,206.0 1126.5,204.4 1125.7,202.4 1126.0,200.0 1125.5,198.0 1125.6,196.0 1125.7,193.9 1123.8,192.2 1124.6,190.0 1123.7,188.1 1122.8,186.2 1122.7,184.1 1123.7,181.9 1122.7,180.0 1122.5,178.0 1122.1,176.0 1121.0,174.1 1121.4,172.0 1121.8,169.5 1122.0,167.0 1123.4,165.0 1124.8,162.8 1127.3,162.0 1129.1,160.4 1130.8,158.7 1132.5,157.0 1130.2,156.4 1128.6,154.8 1127.5,152.7 1125.0,152.2 1124.0,150.0 1123.8,147.4 1122.7,145.0 1121.6,143.0 1120.1,141.3 1118.2,140.0 1118.8,137.9 1119.9,136.2 1121.8,135.0 1123.6,134.2 1125.8,134.1 1127.1,131.9 1129.3,132.1 1131.3,131.7 1132.7,129.7 1135.0,130.0 1136.5,128.5 1134.6,127.6 1132.7,126.9 1131.2,125.3 1129.1,125.0 1126.9,124.7 1125.5,123.0 1125.7,122.0 1123.4,122.4 1121.6,121.0 1119.6,120.3 1117.5,120.0 1116.4,117.5 1117.5,115.0 1119.3,113.6 1119.8,110.9 1122.2,110.0 1122.7,107.5 1123.3,105.0 1125.1,103.8 1127.2,103.0 1128.8,101.5 1130.4,100.0 1133.2,99.4 1136.0,98.8 1135.0,97.5 1132.2,97.1 1129.5,96.5 1128.0,95.0 1126.2,93.8 1124.2,93.0 1123.1,90.8 1121.0,90.0 1119.9,87.6 1120.2,85.0 1119.5,82.3 1121.0,80.0 1124.0,79.0 1126.1,77.9 1127.9,76.3 1129.9,75.0 1130.8,72.6 1132.3,70.9 1134.3,69.7 1135.7,67.9 1138.0,67.0 1136.4,64.9 1136.6,62.4 1136.0,60.0 1135.1,58.0 1133.7,56.4 1132.0,55.0 1133.6,52.7 1134.5,50.0 1132.4,48.5 1132.6,45.9 1131.2,44.1 1130.6,41.8 1129.2,40.0 1129.4,37.0 1128.9,34.4 1130.0,32.2 1131.2,30.0 1130.7,27.5 1130.5,25.0 1132.4,22.0 1130.7,19.9 1128.8,18.0 1128.0,15.0 1128.2,13.0 1129.6,11.1 1130.3,8.8 1131.8,7.0" fill="#000"/></svg>
</body></html>
